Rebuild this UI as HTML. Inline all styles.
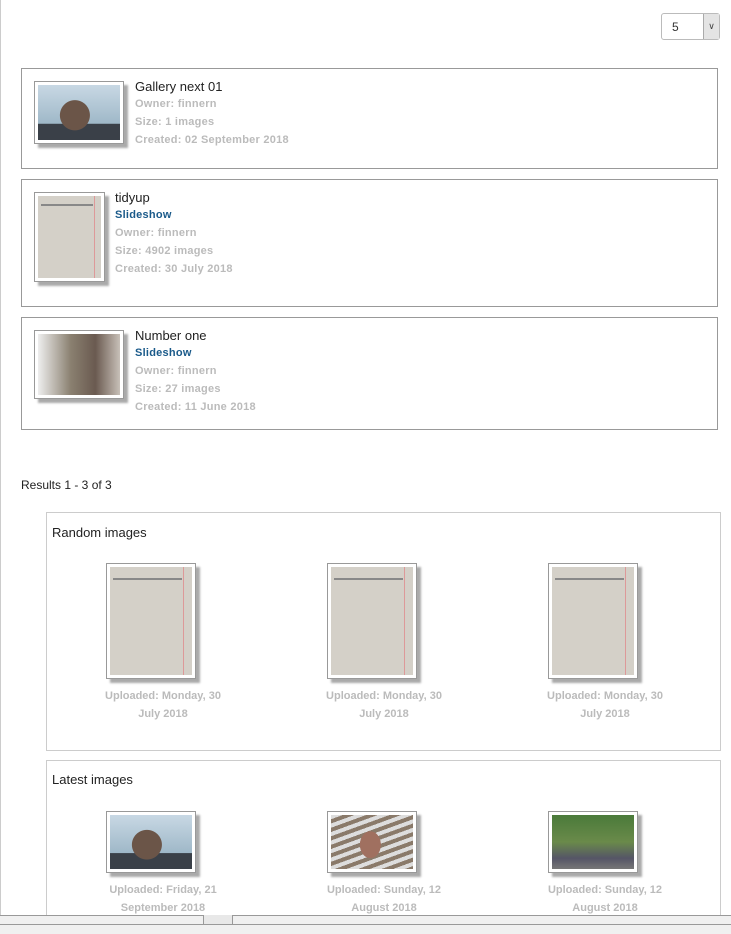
<!DOCTYPE html>
<html><head><meta charset="utf-8"><style>
*{margin:0;padding:0;box-sizing:border-box}
body{width:731px;height:934px;position:relative;overflow:hidden;background:#fff;font-family:"Liberation Sans",Arial,sans-serif}
.a{position:absolute}
.card{position:absolute;border:1px solid #999;background:#fff}
.fr{position:absolute;background:#fff;border:1px solid #999;box-shadow:4px 4px 2px #aaa;padding:3px}
.fr>div{width:100%;height:100%}
.t{position:absolute;font-size:13px;color:#222;white-space:nowrap}
.g{position:absolute;font-size:11px;letter-spacing:0.25px;font-weight:bold;color:#bbb;white-space:nowrap}
.b{position:absolute;font-size:11px;letter-spacing:0.25px;font-weight:bold;color:#1a5a8a;white-space:nowrap}
.cap{position:absolute;width:160px;text-align:center;font-size:11px;font-weight:bold;color:#bbb;line-height:18px}
.doc{background:#d4d0c8;position:relative}
.doc:before{content:"";position:absolute;left:3px;right:12%;top:10%;height:2px;background:#888}
.doc:after{content:"";position:absolute;right:10%;top:0;bottom:0;width:1px;background:#d99}
.face{background:radial-gradient(ellipse 30% 45% at 45% 55%,#6b5548 60%,transparent 62%),linear-gradient(#c8d8e4,#9fb8c8 70%,#3a4048 71%)}
</style></head><body>
<div class="a" style="left:0;top:0;width:1px;height:916px;background:#ccc"></div>
<div class="a" style="left:661px;top:13px;width:59px;height:27px;border:1px solid #bbb;border-radius:3px;background:#fff"></div>
<div class="a" style="left:672px;top:20px;font-size:12px;color:#333">5</div>
<div class="a" style="left:703px;top:14px;width:16px;height:25px;background:#e4e4e4;border-left:1px solid #aaa;font-size:9px;color:#444;text-align:center;line-height:25px">&#8744;</div>

<div class="card" style="left:21px;top:68px;width:697px;height:101px"></div>
<div class="fr" style="left:34px;top:81px;width:90px;height:63px"><div class="face"></div></div>
<div class="t" style="left:135px;top:79px">Gallery next 01</div>
<div class="g" style="left:135px;top:98px">Owner: finnern</div>
<div class="g" style="left:135px;top:116px">Size: 1 images</div>
<div class="g" style="left:135px;top:134px">Created: 02 September 2018</div>

<div class="card" style="left:21px;top:179px;width:697px;height:128px"></div>
<div class="fr" style="left:34px;top:192px;width:71px;height:90px"><div class="doc"></div></div>
<div class="t" style="left:115px;top:190px">tidyup</div>
<div class="b" style="left:115px;top:209px">Slideshow</div>
<div class="g" style="left:115px;top:227px">Owner: finnern</div>
<div class="g" style="left:115px;top:245px">Size: 4902 images</div>
<div class="g" style="left:115px;top:263px">Created: 30 July 2018</div>

<div class="card" style="left:21px;top:317px;width:697px;height:113px"></div>
<div class="fr" style="left:34px;top:330px;width:90px;height:69px"><div style="background:linear-gradient(90deg,#eee,#8a8070 40%,#6a5a50 70%,#c8c0b8)"></div></div>
<div class="t" style="left:135px;top:328px">Number one</div>
<div class="b" style="left:135px;top:347px">Slideshow</div>
<div class="g" style="left:135px;top:365px">Owner: finnern</div>
<div class="g" style="left:135px;top:383px">Size: 27 images</div>
<div class="g" style="left:135px;top:401px">Created: 11 June 2018</div>

<div class="t" style="left:21px;top:478px;font-size:12px">Results 1 - 3 of 3</div>

<div class="card" style="left:46px;top:512px;width:675px;height:239px;border-color:#ccc"></div>
<div class="t" style="left:52px;top:525px">Random images</div>
<div class="fr" style="left:106px;top:563px;width:90px;height:116px"><div class="doc"></div></div>
<div class="fr" style="left:327px;top:563px;width:90px;height:116px"><div class="doc"></div></div>
<div class="fr" style="left:548px;top:563px;width:90px;height:116px"><div class="doc"></div></div>
<div class="cap" style="left:83px;top:687px">Uploaded: Monday, 30<br>July 2018</div>
<div class="cap" style="left:304px;top:687px">Uploaded: Monday, 30<br>July 2018</div>
<div class="cap" style="left:525px;top:687px">Uploaded: Monday, 30<br>July 2018</div>

<div class="card" style="left:46px;top:760px;width:675px;height:170px;border-color:#ccc"></div>
<div class="t" style="left:52px;top:772px">Latest images</div>
<div class="fr" style="left:106px;top:811px;width:90px;height:62px"><div class="face"></div></div>
<div class="fr" style="left:327px;top:811px;width:90px;height:62px"><div style="background:radial-gradient(ellipse 18% 35% at 48% 55%,#a07060 70%,transparent 72%),repeating-linear-gradient(160deg,#ddd 0 4px,#8a7a6a 4px 8px)"></div></div>
<div class="fr" style="left:548px;top:811px;width:90px;height:62px"><div style="background:linear-gradient(#4a7a3a,#6a8a4a 50%,#556 80%,#777)"></div></div>
<div class="cap" style="left:83px;top:881px">Uploaded: Friday, 21<br>September 2018</div>
<div class="cap" style="left:304px;top:881px">Uploaded: Sunday, 12<br>August 2018</div>
<div class="cap" style="left:525px;top:881px">Uploaded: Sunday, 12<br>August 2018</div>

<div class="a" style="left:0;top:915px;width:731px;height:19px;background:#f0f0f0;border-top:1px solid #999"></div>
<div class="a" style="left:0;top:924px;width:731px;height:1px;background:#999"></div>
<div class="a" style="left:203px;top:915px;width:30px;height:9px;background:#e8e8e8;border-left:1px solid #999;border-right:1px solid #999"></div>
</body></html>
